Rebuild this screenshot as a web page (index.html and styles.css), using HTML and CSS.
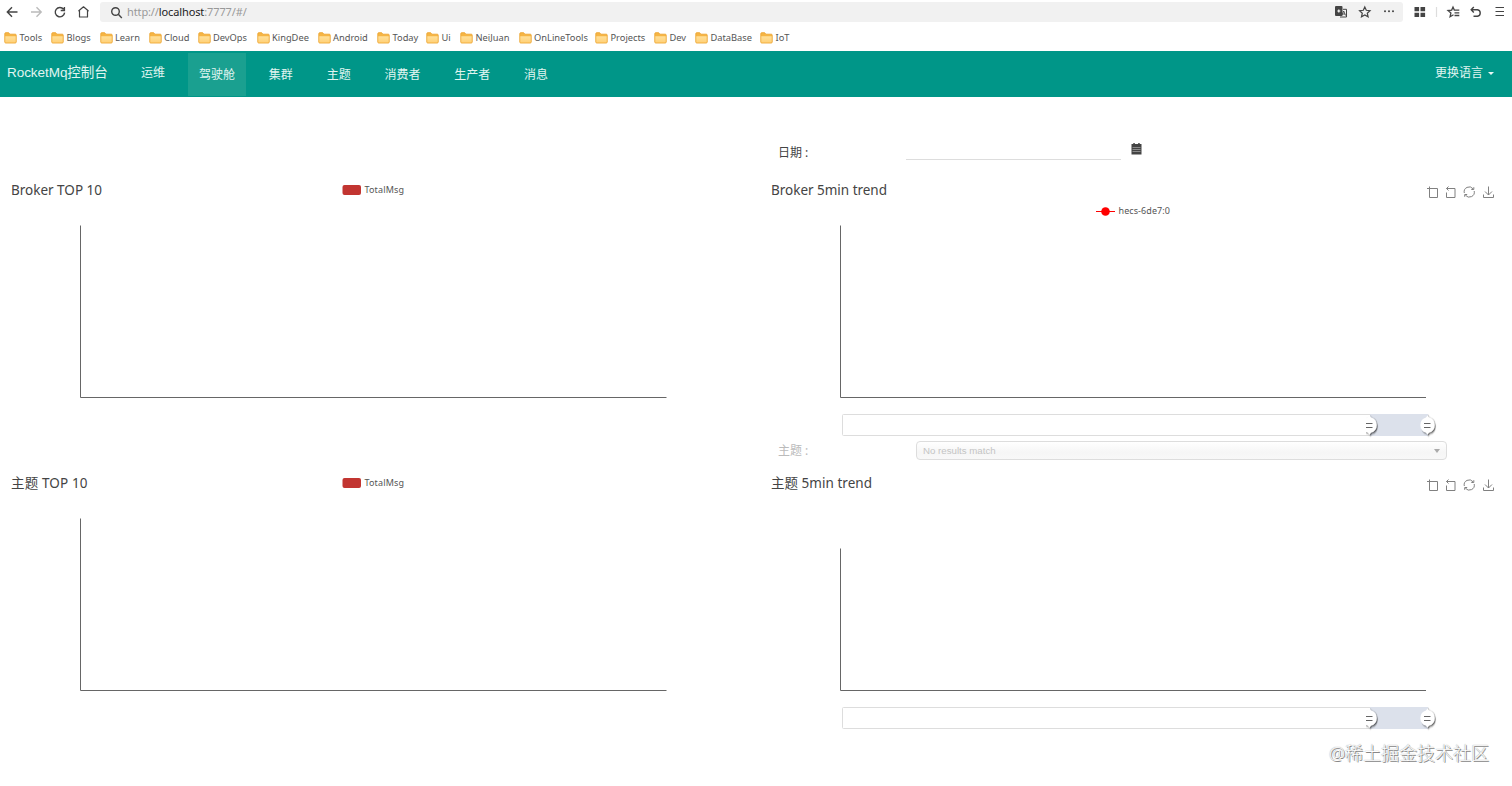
FILE: index.html
```html
<!DOCTYPE html>
<html lang="zh-CN">
<head>
<meta charset="utf-8">
<title>RocketMq控制台</title>
<link rel="stylesheet" href="styles.css">
</head>
<body>
<svg class="defs" width="0" height="0">
  <defs>
    <linearGradient id="folderFill" x1="0" y1="0" x2="0" y2="1"><stop offset="0" stop-color="#ffe09a"/><stop offset="1" stop-color="#ffd077"/></linearGradient>
    <filter id="handleShadow" x="-50%" y="-50%" width="200%" height="200%"><feDropShadow dx="1.2" dy="1.2" stdDeviation="0.8" flood-color="#000" flood-opacity="0.65"/></filter>
    <symbol id="folder" viewBox="0 0 13 12"><path d="M.8 10V1.600q0-.9.9-.9h3l1.100 1.500h5.500q.9 0 .9.9V10q0 1-1 1H1.700q-.9 0-.9-1z" fill="#f6b544" stroke="#eda736" stroke-width=".9"/><path d="M1.300 4.300h10.400V10q0 .6-.6.6H1.900q-.6 0-.6-.6z" fill="url(#folderFill)"/></symbol>
    <g id="toolbox" fill="none" stroke="#808080" stroke-width="1">
      <path d="M667 13.500h10.500v9h-8v-11"/>
      <path d="M688.500 11.500l-2 2l2 2M686.500 13.500h8.500v9h-8.500v-5"/>
      <path d="M704.300 18a5 5 0 0 1 8.800-4.200M714.200 16a5 5 0 0 1-8.800 4.200M713.800 12.200v2.300h-2.500M704.700 21.800v-2.300h2.500"/>
      <path d="M728.500 11.500v8.500M725 16.500l3.500 3.500l3.500-3.500M723.500 19.500v3h10v-3"/>
    </g>
    <g id="slider">
      <rect x="82.500" y="-10.500" width="586" height="21" rx="1" fill="#fff" stroke="#ddd"/>
      <rect x="610" y="-11" width="58" height="22" fill="#dce1eb"/>
      <g id="handle"><path d="M609.500-9.500l1.800 1.900a7.700 7.700 0 0 1 0 15.200l-1.800 1.900l-1.800-1.900a7.700 7.700 0 0 1 0-15.200z" transform="translate(609.500 0) scale(.87 1) translate(-609.500 0)" fill="#fff" filter="url(#handleShadow)"/><path d="M606-1.500h6.500M606 2.500h6.500" stroke="#666"/></g>
      <rect x="600" y="-10" width="6" height="20" fill="#fff"/>
      <use href="#handle" x="58"/>
    </g>
  </defs>
</svg>

<div class="toolbar">
  <div class="nav-icons">
    <svg width="100" height="24" fill="none" stroke="#444" stroke-width="1.400">
      <path d="M17.500 12H7.500M12 7.200L7.300 12l4.700 4.800"/>
      <path d="M31 12h10M36.500 7.200l4.700 4.800l-4.700 4.800" stroke="#bbb"/>
      <path d="M63.600 9.200a4.700 4.700 0 1 0 1 3.500M64.400 7v3.500h-3.700"/>
      <path d="M78.800 10.800l4.700-4l4.700 4h-.7v6.200h-8v-6.200z" stroke-width="1.200" stroke-linejoin="round"/>
    </svg>
  </div>
  <div class="address">
    <svg class="search" width="13" height="13" fill="none" stroke="#444" stroke-width="1.400"><circle cx="5.500" cy="5.500" r="3.800"/><path d="M8.300 8.300l3.500 3.700"/></svg>
    <span class="url">http://<b>localhost</b>:7777/#/</span>
  </div>
  <svg class="actions" width="182" height="24" fill="none" stroke="#444" stroke-width="1.200">
    <rect x="5" y="6" width="7.500" height="10" rx="1" fill="#444" stroke="none"/><path d="M7.300 11h3M8.800 9.500v3" stroke="#fff"/><path d="M13 9.300h3.500v7.700H10" stroke-width="1"/><path d="M11.800 15.500l1.900-4.500l1.900 4.500M12.400 14h2.600" stroke-width=".9"/>
    <path d="M34.800 7l1.500 3.300l3.700.4l-2.700 2.500l.8 3.600l-3.300-1.800l-3.300 1.800l.8-3.600l-2.700-2.500l3.700-.4z"/>
    <g fill="#444" stroke="none"><circle cx="55" cy="11.200" r="1"/><circle cx="59" cy="11.200" r="1"/><circle cx="63" cy="11.200" r="1"/><path d="M84.500 7h4.600v4.300h-4.600zM90.500 7h4.600v4.300h-4.600zM84.500 12.700h4.600V17h-4.600zM90.500 12.700h4.600V17h-4.600z"/></g>
    <path d="M106.500 7v10" stroke="#ddd"/>
    <path d="M123.500 14.800l-3.400 2l.8-3.800l-2.900-2.500l3.700-.4l1.300-3l1.300 3h5M124.500 12.800h4.800M124.500 15.500h4.800" stroke-width="1.300"/>
    <path d="M143.800 7l-2.600 2.800l2.600 2.700M141.500 9.800h6a3.300 3.300 0 0 1 0 6.500h-4" stroke-width="1.400"/>
    <path d="M165.500 7.500h8.500M165.500 11.500h8.500M165.500 15.500h8.500"/>
  </svg>
</div>

<div class="bookmarks">
  <span><svg><use href="#folder"/></svg>Tools</span><span><svg><use href="#folder"/></svg>Blogs</span><span><svg><use href="#folder"/></svg>Learn</span><span><svg><use href="#folder"/></svg>Cloud</span><span><svg><use href="#folder"/></svg>DevOps</span><span><svg><use href="#folder"/></svg>KingDee</span><span><svg><use href="#folder"/></svg>Android</span><span><svg><use href="#folder"/></svg>Today</span><span><svg><use href="#folder"/></svg>Ui</span><span><svg><use href="#folder"/></svg>NeiJuan</span><span><svg><use href="#folder"/></svg>OnLineTools</span><span><svg><use href="#folder"/></svg>Projects</span><span><svg><use href="#folder"/></svg>Dev</span><span><svg><use href="#folder"/></svg>DataBase</span><span><svg><use href="#folder"/></svg>IoT</span>
</div>

<nav class="navbar">
  <span class="brand">RocketMq控制台</span>
  <a class="ops">运维</a>
  <div class="tabs"><a class="active">驾驶舱</a><a>集群</a><a>主题</a><a>消费者</a><a>生产者</a><a>消息</a></div>
  <a class="language">更换语言<i class="caret"></i></a>
</nav>

<main class="dashboard">
  <section class="column left">
    <svg class="chart" width="760" height="262">
      <text class="title" x="11" y="20" textLength="91">Broker TOP 10</text>
      <rect x="342.500" y="10" width="18.500" height="10" rx="2" fill="#c23531"/>
      <text class="legend" x="364.500" y="18" textLength="39.500">TotalMsg</text>
      <path class="axis" d="M80.500 50.500v172h586"/>
    </svg>
    <svg class="chart" width="760" height="262">
      <text class="title" x="11" y="20" textLength="76.500">主题 TOP 10</text>
      <rect x="342.500" y="10" width="18.500" height="10" rx="2" fill="#c23531"/>
      <text class="legend" x="364.500" y="18" textLength="39.500">TotalMsg</text>
      <path class="axis" d="M80.500 50.500v172h586"/>
    </svg>
  </section>
  <section class="column right">
    <div class="date-row">
      <span class="label">日期 :</span><span class="date-input"></span>
      <svg class="calendar" width="11" height="12"><path d="M.5 1h1.800V0h1.500v1h3.400V0h1.500v1h1.800v10.500H.5z" fill="#444"/><path d="M1.500 4.500h8M1.500 6.500h8M1.500 8.500h8" stroke="#aaa" stroke-width=".7"/></svg>
    </div>
    <svg class="chart" width="752" height="262">
      <text class="title" x="11" y="20" textLength="116">Broker 5min trend</text>
      <use href="#toolbox"/>
      <path d="M336 36.500h19" stroke="#f00"/><circle cx="345.500" cy="36.500" r="4.300" fill="#f00"/>
      <text class="legend" x="358.500" y="39" textLength="51.500">hecs-6de7:0</text>
      <path class="axis" d="M80.500 50.500v172H666"/>
      <use href="#slider" y="250"/>
    </svg>
    <div class="topic-row"><span class="label">主题 :</span><div class="select"><span>No results match</span><i></i></div></div>
    <svg class="chart" width="752" height="262">
      <text class="title" x="11" y="20" textLength="101">主题 5min trend</text>
      <use href="#toolbox"/>
      <path class="axis" d="M80.500 80.500v142H666"/>
      <use href="#slider" y="250"/>
    </svg>
  </section>
</main>
<div class="watermark">@稀土掘金技术社区</div>
</body>
</html>
```
FILE: styles.css
```css
* { box-sizing: border-box; }
body { margin: 0; height: 786px; overflow: hidden; background: #fff; color: #444; font-family: "Noto Sans", "Noto Sans CJK SC", sans-serif; }
.defs { position: absolute; }
svg { display: block; flex: none; }
.toolbar { display: flex; height: 24px; }
.nav-icons { width: 100px; }
.address { display: flex; align-items: center; width: 1303px; height: 20px; margin-top: 2px; padding-left: 10px; background: #f1f1f1; border-radius: 3px; }
.search { margin-right: 4px; }
.url { padding-bottom: 2px; color: #999; font-size: 11px; letter-spacing: -.12px; white-space: nowrap; }
.url b { color: #222; font-weight: 400; }
.actions { margin-left: -73px; }
.bookmarks { display: grid; grid-template-columns: 47px 48.500px 49px 49px 59px 61px 59.500px 49px 34px 58.500px 76.500px 59px 41px 65px 40px; align-items: center; height: 27px; padding-left: 4px; color: #555; font-size: 9.300px; white-space: nowrap; }
.bookmarks span { display: flex; align-items: center; gap: 2.500px; }
.bookmarks svg { width: 13px; height: 12px; }
.navbar { display: flex; height: 46px; background: #009688; color: #e0f5f1; font-size: 12px; line-height: 18px; }
.brand { width: 141px; padding: 13px 0 0 7px; font-family: "Liberation Sans", "Noto Sans CJK SC", sans-serif; font-size: 13.500px; letter-spacing: -.05px; white-space: nowrap; }
.ops { width: 47px; padding-top: 13px; }
.tabs { display: flex; margin-top: 2px; height: 43px; }
.tabs a { padding: 13px 11px 0 11px; margin-right: 11.800px; white-space: nowrap; }
.tabs .active { background: #1aa090; }
.language { display: flex; margin-left: auto; padding: 13px 18px 0 0; }
.caret { width: 0; height: 0; margin: 8px 0 0 5px; border: 3px solid transparent; border-top-color: #e9f8f5; border-bottom: 0; }
.dashboard { display: grid; grid-template-columns: 760px 752px; }
.column { display: flex; flex-direction: column; }
.left { padding-top: 78px; gap: 31px; }
.chart { overflow: visible; }
.title { fill: #444; font-size: 13.500px; }
.legend { fill: #555; font-size: 9px; }
.axis { fill: none; stroke: #666; stroke-width: 1; }
.date-row { display: flex; height: 78px; padding: 46px 0 0 18px; }
.label { flex: none; font-size: 12px; line-height: 18px; }
.date-row .label { width: 128px; padding-top: 1px; }
.date-input { width: 215px; height: 17px; border-bottom: 1px solid #ddd; }
.calendar { margin: 0 0 0 10px; }
.topic-row { display: flex; align-items: center; height: 31px; padding: 0 0 4px 18px; color: #bbb; }
.topic-row .label { width: 138px; }
.select { display: flex; justify-content: space-between; align-items: center; width: 531px; height: 19px; padding: 0 6px; border: 1px solid #ddd; border-radius: 4px; background: linear-gradient(#fff, #f6f6f6 60%, #f8f8f8); font: 9.700px "Liberation Sans", sans-serif; color: #c4c4c4; }
.select i { border: 3px solid transparent; border-top: 4px solid #aaa; border-bottom: 0; }
.watermark { position: absolute; right: 23px; top: 740px; color: #fff; font-size: 18px; font-weight: 300; line-height: 26px; white-space: nowrap; text-shadow: 1px 1px 0 #888, 0 0 1px #777; }
```
